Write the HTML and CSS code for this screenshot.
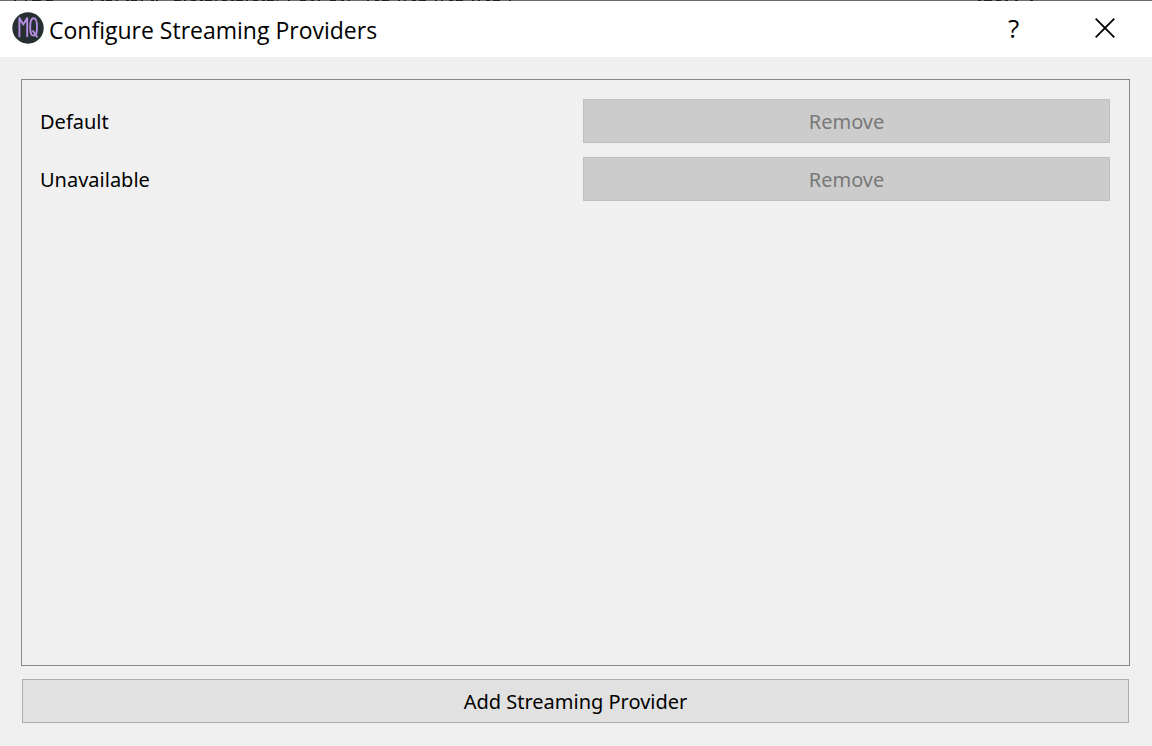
FILE: index.html
```html
<!DOCTYPE html>
<html lang="en">
<head>
<meta charset="utf-8">
<title>Configure Streaming Providers</title>
<link rel="stylesheet" href="styles.css">
</head>
<body>
<div class="dialog">
  <svg class="backdrop-edge" height="1" aria-hidden="true">
    <g stroke="#241c22" stroke-width="1">
      <path d="M14 .5H16M25 .5H27M32 .5H41M46 .5H53M978 .5H981M984 .5H992M996 .5H1001M1005 .5H1008M1015 .5H1018M1030 .5H1033"/>
      <path d="M91 .5H158" stroke-dasharray="2 8 3 2 6 4"/>
      <path d="M174 .5H278" stroke-dasharray="7 3 2 5 5 4 3 2"/>
      <path d="M288 .5H355" stroke-dasharray="2 10 6 5 3 4"/>
      <path d="M367 .5H512" stroke-dasharray="2 6 4 3 7 9 2 4"/>
    </g>
  </svg>
  <header class="titlebar">
    <svg class="app-icon" viewBox="0 0 32 32" aria-hidden="true">
      <circle cx="16" cy="16" r="15.7" fill="#263032"/>
      <g fill="none" stroke="#b48ee0" stroke-width="1.9" stroke-linecap="round" stroke-linejoin="round">
        <path d="M7.4 24.4V6L11.3 12.5L15.2 6V24.2"/>
        <path d="M21.6 6.2C18.8 6.2 18.2 9 18.2 15S18.8 23.6 21.6 23.6S25 21 25 15S24.4 6.2 21.6 6.2Z"/>
        <path d="M21 19L25 24.8"/>
      </g>
    </svg>
    <h1 class="title">Configure Streaming Providers</h1>
    <button class="window-button" type="button" aria-label="Help">?</button>
    <button class="window-button" type="button" aria-label="Close">
      <svg class="close-icon" viewBox="0 0 20 20" aria-hidden="true"><path d="M0.7 0.7L19.3 19.3M19.3 0.7L0.7 19.3" fill="none" stroke="#000" stroke-width="1.8"/></svg>
    </button>
  </header>
  <main class="content">
    <ul class="providers">
      <li class="provider"><span>Default</span><button class="button" type="button" disabled>Remove</button></li>
      <li class="provider"><span>Unavailable</span><button class="button" type="button" disabled>Remove</button></li>
    </ul>
    <button class="button add" type="button">Add Streaming Provider</button>
  </main>
</div>
</body>
</html>
```

FILE: styles.css
```css
* { box-sizing: border-box; }

body {
  margin: 0;
  background: #f0f0f0;
  color: #000;
  font-family: "Noto Sans", "Open Sans", sans-serif;
  font-size: 20px;
}

.dialog {
  min-height: 100vh;
  display: flex;
  flex-direction: column;
}

.backdrop-edge {
  display: block;
  width: 100%;
  height: 1px;
  background: #6b6b6b;
}

.titlebar {
  display: flex;
  align-items: center;
  padding: 0 2px 2px 12px;
  background: #fff;
}

.app-icon {
  width: 32px;
  height: 32px;
  margin-right: 5px;
}

.title {
  flex: 1;
  margin: 0;
  padding-top: 3px;
  font-family: "Open Sans", sans-serif;
  font-size: 23px;
  font-weight: 400;
}

.window-button {
  display: flex;
  align-items: center;
  justify-content: center;
  width: 91px;
  height: 54px;
  padding: 0;
  border: 0;
  background: none;
  color: #000;
  font: 500 26px "Open Sans", sans-serif;
}

.close-icon {
  width: 20px;
  height: 20px;
}

.content {
  flex: 1;
  display: flex;
  flex-direction: column;
  gap: 13px;
  padding: 22px 22px 23px 21px;
}

.providers {
  flex: 1;
  display: flex;
  flex-direction: column;
  gap: 14px;
  margin: 0;
  padding: 19px 19px 19px 18px;
  border: 1px solid #828790;
  list-style: none;
}

.provider {
  display: grid;
  grid-template-columns: 1fr 1fr;
  align-items: center;
  gap: 16px;
}

.button {
  height: 44px;
  padding: 0 16px;
  border: 1px solid #adadad;
  background: #e1e1e1;
  color: #000;
  font: inherit;
}

.button:disabled {
  border-color: #bfbfbf;
  background: #ccc;
  color: #787878;
}

.add {
  margin: 0 1px;
}
```
